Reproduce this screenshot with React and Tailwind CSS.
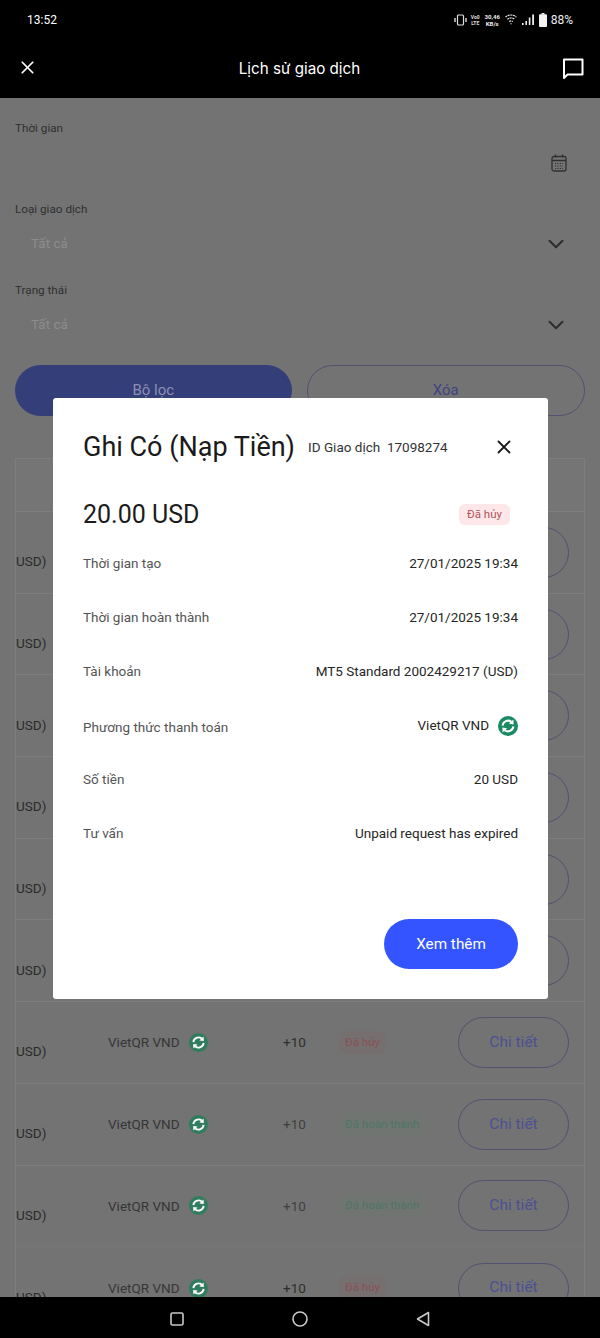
import React from "react";
import { X, ChevronDown } from "lucide-react";

const details = [
  { label: "Thời gian tạo", value: "27/01/2025 19:34", h: "h-[54px]" },
  { label: "Thời gian hoàn thành", value: "27/01/2025 19:34", h: "h-[54px]" },
  { label: "Tài khoản", value: "MT5 Standard 2002429217 (USD)", h: "h-[54px]" },
  { label: "Phương thức thanh toán", value: "VietQR VND", icon: true, h: "h-[55px]" },
  { label: "Số tiền", value: "20 USD", h: "h-[53px]" },
  { label: "Tư vấn", value: "Unpaid request has expired", h: "h-[54px]" },
];

const rows = [
  { status: "cancel" },
  { status: "done" },
  { status: "done" },
  { status: "cancel" },
  { status: "done" },
  { status: "done" },
  { status: "cancel" },
  { status: "done" },
  { status: "done", faint: true },
  { status: "cancel", last: true },
];

function VietQrIcon({ size = 20 }) {
  return (
    <svg width={size} height={size} viewBox="0 0 20 20">
      <circle cx="10" cy="10" r="10" fill="currentColor" />
      <path d="M4.6 9.6 A5.5 5.5 0 0 1 13.4 5.8" fill="none" stroke="#fff" strokeWidth="2" />
      <path d="M15.4 3.6 L15.6 8.4 L10.9 7.8 Z" fill="#fff" />
      <path d="M15.4 10.4 A5.5 5.5 0 0 1 6.6 14.2" fill="none" stroke="#fff" strokeWidth="2" />
      <path d="M4.6 16.4 L4.4 11.6 L9.1 12.2 Z" fill="#fff" />
    </svg>
  );
}

function StatusBar() {
  return (
    <div className="h-[38px] flex items-center justify-between pl-[27px] pr-[27px] pt-[1px] text-white">
      <span className="text-[12px]">13:52</span>
      <div className="flex items-center">
        <svg width="13" height="12" viewBox="0 0 13 12" fill="none" stroke="#ddd">
          <rect x="3.5" y="1" width="6" height="10" rx="1" strokeWidth="1.2" />
          <path d="M1 4v4M12 4v4" strokeWidth="1.4" />
        </svg>
        <div className="ml-[4px] w-[9px] text-center text-[5px] leading-[6px] font-bold text-[#ddd]">
          <div>Vo0</div>
          <div>LTE</div>
        </div>
        <div className="ml-[4px] w-[17px] text-center text-[6px] leading-[7px] font-bold text-[#eee]">
          <div>30,46</div>
          <div>KB/s</div>
        </div>
        <svg className="ml-[4px]" width="12" height="11" viewBox="0 0 12 11" fill="none" stroke="#eee" strokeWidth="1.1" strokeDasharray="2 0.6">
          <path d="M0.5 3.2a8 8 0 0 1 11 0" />
          <path d="M2.4 5.4a5.2 5.2 0 0 1 7.2 0" />
          <path d="M4.2 7.6a2.6 2.6 0 0 1 3.6 0" />
          <path d="M5.4 9.8h1.2" />
        </svg>
        <svg className="ml-[5px]" width="13" height="12" viewBox="0 0 13 12" fill="#eee">
          <rect x="0" y="9" width="1.6" height="2" />
          <rect x="3.4" y="7" width="1.6" height="4" />
          <rect x="6.8" y="3.5" width="1.6" height="7.5" />
          <rect x="10.2" y="0.5" width="1.8" height="10.5" />
        </svg>
        <svg className="ml-[4px]" width="8" height="14" viewBox="0 0 8 14" fill="#f2f2f2">
          <rect x="2.5" y="0" width="3" height="1.5" />
          <rect x="0" y="1.3" width="8" height="12.7" rx="1" />
        </svg>
        <span className="ml-[4px] text-[12px] text-[#eee]">88%</span>
      </div>
    </div>
  );
}

function Header() {
  return (
    <div className="h-[60px] flex items-center justify-between pl-[17px] pr-[15px] pb-[1px]">
      <X size={21} color="#fff" strokeWidth={2} />
      <span className="pt-[3px] font-['Inter',sans-serif] text-[15.2px] text-white">Lịch sử giao dịch</span>
      <svg width="24" height="24" viewBox="0 0 24 24" fill="none" stroke="#fff" strokeWidth="2" strokeLinejoin="round">
        <path d="M3 3.5h18.5v15H6.5L3 22z" />
      </svg>
    </div>
  );
}

function FilterField({ label, value, calendar }) {
  return (
    <div className="mb-[12px]">
      <div className="h-[18px] text-[11.7px] leading-[18px] text-[#303030]">{label}</div>
      <div className="h-[51px] flex items-center justify-between pl-[16px] pr-[20px]">
        <span className="text-[13.5px] text-[#8d8d8d]">{value}</span>
        {calendar ? (
          <svg className="-mr-[2px]" width="16" height="18" viewBox="0 0 16 18" fill="none" stroke="#303030" strokeWidth="1.3">
            <rect x="1" y="2.5" width="14" height="14.5" rx="2" />
            <path d="M1 6.5h14M4.5 0.5v3M11.5 0.5v3" />
            <path d="M4 9.5h8M4 12h8M4 14.5h8" strokeDasharray="1.2 1.2" strokeWidth="1" />
          </svg>
        ) : (
          <ChevronDown className="-mr-[4px]" size={26} color="#2c2c2c" strokeWidth={1.8} />
        )}
      </div>
    </div>
  );
}

function TableRow({ status, last, faint }) {
  const cancelled = status === "cancel";
  const border = last ? "" : faint ? "border-b border-[#767676]" : "border-b border-[#7d7d7d]";
  return (
    <div className={`h-[81.7px] shrink-0 flex items-center text-[13.5px] ${border}`}>
      <span className="w-[92px] pt-[18px] text-[13.5px] text-[#2b2b2b]">USD)</span>
      <div className="w-[175px] flex items-center text-[#363636]">
        <span>VietQR VND</span>
        <span className="ml-[9px] text-[#2f7c5f]">
          <VietQrIcon size={19} />
        </span>
      </div>
      <span className={`w-[53px] ${cancelled ? "text-[#2e2e2e]" : "text-[#3f3f3f]"}`}>+10</span>
      <div className="w-[122px] pl-[3px]">
        <span
          className={`inline-block rounded-md px-[6px] py-[3px] text-[11.5px] ${
            cancelled ? "bg-[#766f6f] text-[#8a5058]" : "bg-[#707572] text-[#4d7665]"
          }`}
        >
          {cancelled ? "Đã hủy" : "Đã hoàn thành"}
        </span>
      </div>
      <button className="w-[111px] h-[51px] shrink-0 rounded-[26px] border border-[#50526f] text-[15.5px] text-[#4c5192]">
        Chi tiết
      </button>
    </div>
  );
}

function TransactionModal() {
  return (
    <div className="absolute left-[53px] top-[398px] w-[495px] h-[601px] rounded-[3px] bg-white px-[30px] flex flex-col text-[#212121]">
      <div className="h-[98px] flex items-center">
        <span className="text-[27px] text-[#1a1a1a]">Ghi Có (Nạp Tiền)</span>
        <span className="ml-[13px] mt-[1px] text-[13.5px] whitespace-pre text-[#333]">ID Giao dịch  17098274</span>
        <X className="ml-auto mr-[3px]" size={22} color="#1a1a1a" strokeWidth={2} />
      </div>
      <div className="h-[37px] flex items-center justify-between">
        <span className="text-[25px] text-[#1c1c1c]">20.00 USD</span>
        <span className="mr-[8px] rounded-md bg-[#fde7e8] px-[8px] py-[2px] text-[11.5px] text-[#b2535b]">Đã hủy</span>
      </div>
      <div className="mt-[3px] flex flex-col">
        {details.map((d) => (
          <div key={d.label} className={`${d.h} flex items-center justify-between text-[13.5px]`}>
            <span className={`text-[#555] ${d.icon ? "pt-[3px]" : ""}`}>{d.label}</span>
            <span className="flex items-center text-[#262626]">
              {d.value}
              {d.icon && (
                <span className="ml-[9px] text-[#1a8a62]">
                  <VietQrIcon />
                </span>
              )}
            </span>
          </div>
        ))}
      </div>
      <div className="mt-auto mb-[30px] flex justify-end">
        <button className="w-[134px] h-[50px] rounded-[25px] bg-[#3354ff] text-[15.3px] text-white">Xem thêm</button>
      </div>
    </div>
  );
}

export default function App() {
  return (
    <div className="relative w-[600px] h-[1338px] overflow-hidden flex flex-col bg-black font-['Roboto',sans-serif]">
      <StatusBar />
      <Header />

      <main className="flex-1 min-h-0 overflow-hidden bg-[#737373] pt-[21px]">
        <div className="px-[15px] flex flex-col">
          <FilterField label="Thời gian" calendar />
          <FilterField label="Loại giao dịch" value="Tất cả" />
          <FilterField label="Trạng thái" value="Tất cả" />
          <div className="mt-[3px] flex gap-[15px]">
            <button className="flex-1 h-[51px] rounded-[26px] bg-[#343e79] text-[15px] text-[#8b90b4]">Bộ lọc</button>
            <button className="flex-1 h-[51px] rounded-[26px] border border-[#50526f] text-[15px] text-[#3f4480]">Xóa</button>
          </div>
        </div>

        <div className="mx-[15px] mt-[42px] border-x border-t border-[#7d7d7d]">
          <div className="h-[53px] border-b border-[#7d7d7d] bg-[#757575]" />
          <div className="flex flex-col">
            {rows.map((row, i) => (
              <TableRow key={i} status={row.status} last={row.last} faint={row.faint} />
            ))}
          </div>
        </div>
      </main>

      <nav className="h-[41px] shrink-0 flex items-center justify-center gap-[108px] bg-black pt-[2px]">
        <svg width="14" height="14" viewBox="0 0 14 14" fill="none" stroke="#c9c9c9" strokeWidth="1.6">
          <rect x="1" y="1" width="12" height="12" rx="1.5" />
        </svg>
        <svg width="16" height="16" viewBox="0 0 16 16" fill="none" stroke="#c9c9c9" strokeWidth="1.6">
          <circle cx="8" cy="8" r="7" />
        </svg>
        <svg width="14" height="16" viewBox="0 0 14 16" fill="none" stroke="#c9c9c9" strokeWidth="1.6" strokeLinejoin="round">
          <path d="M12.5 1.5v13L1.5 8z" />
        </svg>
      </nav>

      <TransactionModal />
    </div>
  );
}
